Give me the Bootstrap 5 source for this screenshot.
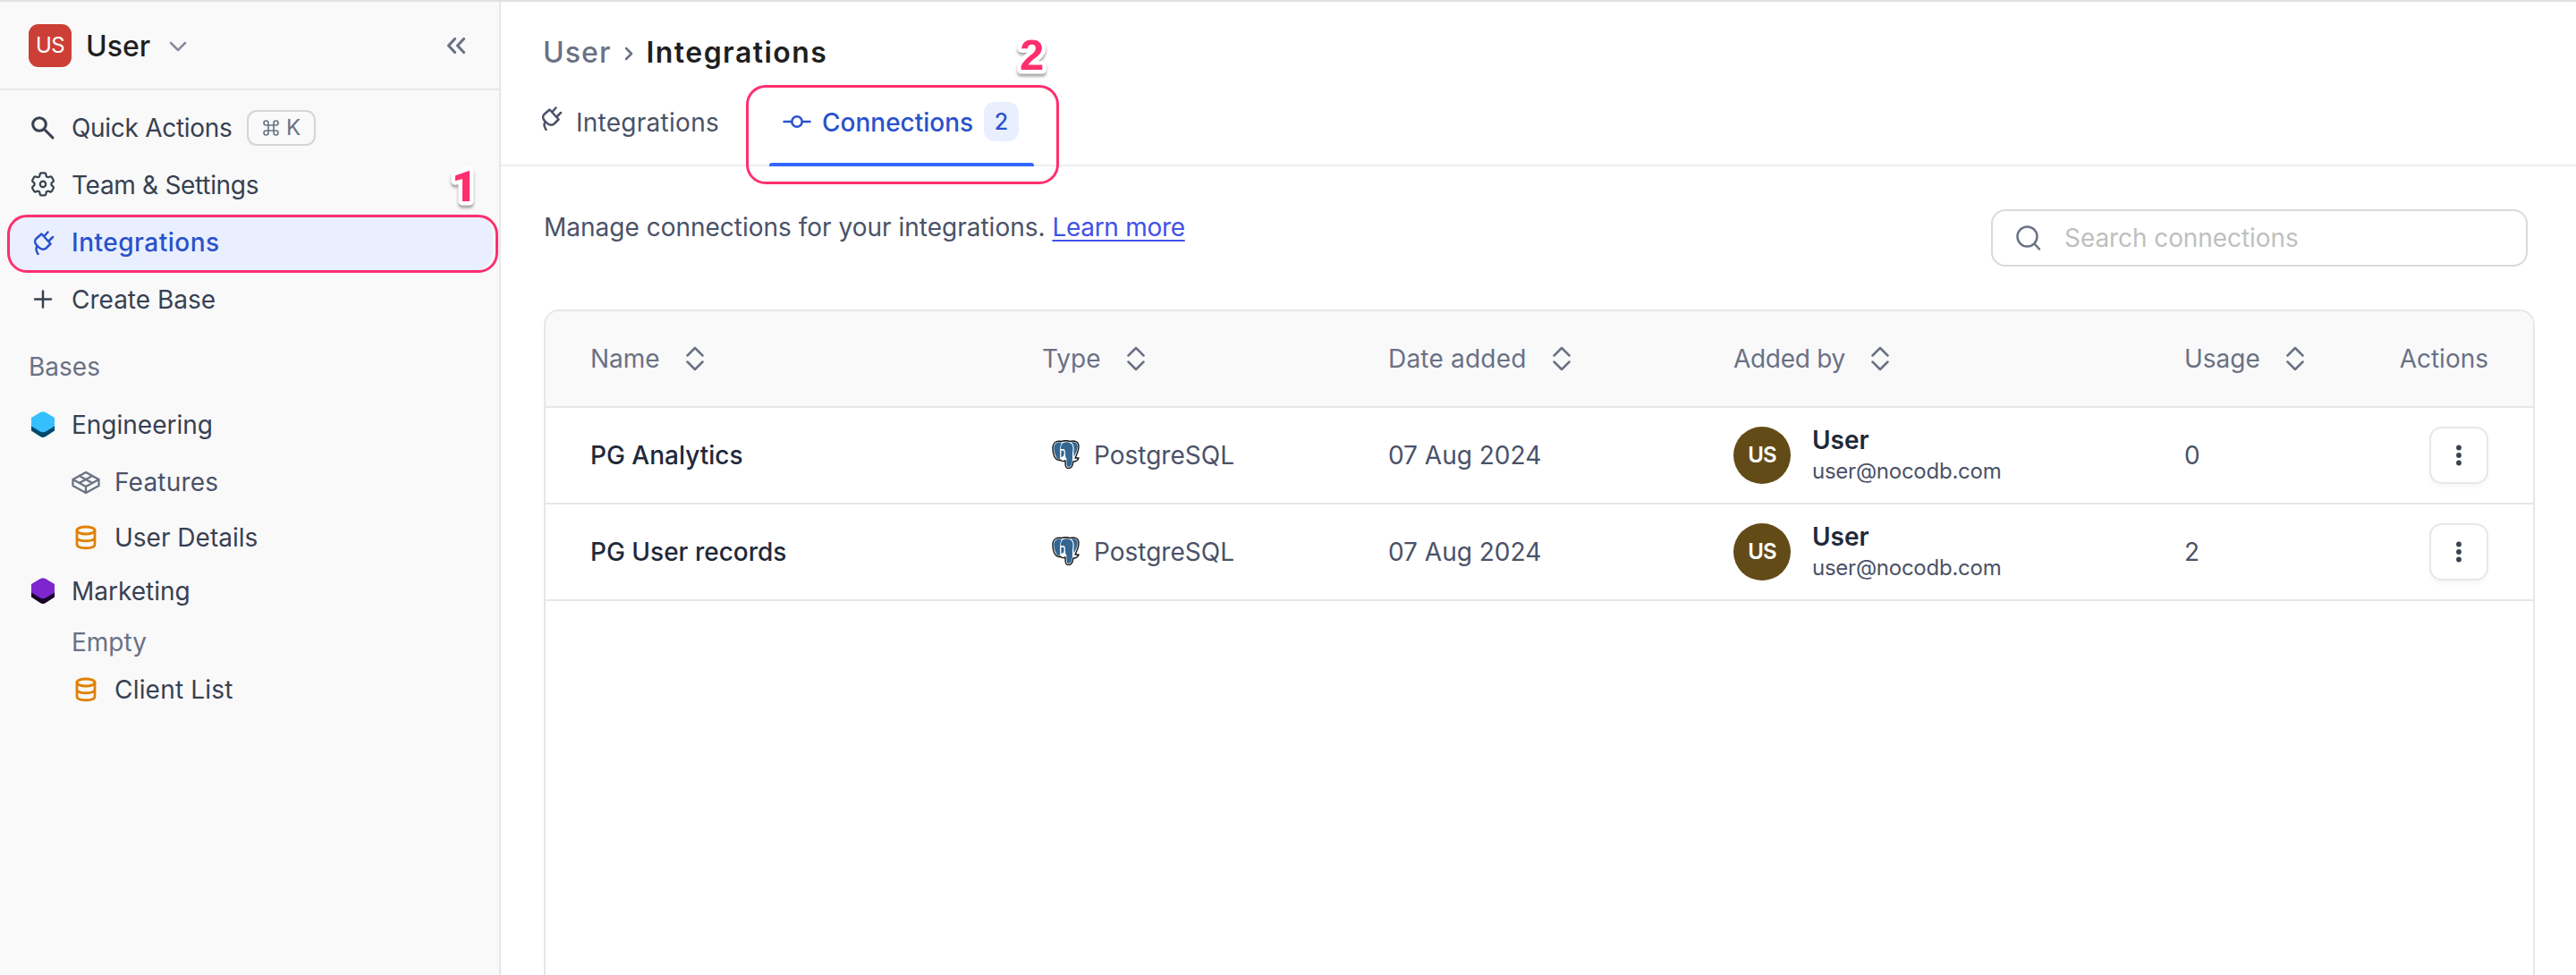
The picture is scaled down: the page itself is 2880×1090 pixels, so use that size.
<!DOCTYPE html>
<html lang="en">
<head>
<meta charset="utf-8">
<title>Integrations - Connections</title>
<link href="https://cdn.jsdelivr.net/npm/bootstrap@5.3.0/dist/css/bootstrap.min.css" rel="stylesheet">
<style>
body{font-family:Inter,"Liberation Sans",sans-serif;font-size:28px;line-height:40px;color:#374151;background:#fff;height:1090px;overflow:hidden}
svg{display:block;flex:none;overflow:visible;fill:none;stroke:currentColor;stroke-width:2.5;stroke-linecap:round;stroke-linejoin:round}
.sw-thin{stroke-width:1.6}.sw-mid{stroke-width:2.3}.sw-bold{stroke-width:3.1}.no-stroke{stroke:none}
.fw-medium{font-weight:500}
.t-slate{color:#6a7184}.t-gray{color:#4a5268}.t-dark{color:#1f293a}

.app-shell{height:1090px;border-top:2px solid #e1e1e1}

/* sidebar */
.side-pane{width:560px;background:#f9f9fa;border-right:2px solid #e7e7e9}
.side-head{height:99px;border-bottom:2px solid #e7e7e9;padding:0 38px 0 32px}
.ws-avatar{width:48px;height:48px;border-radius:11px;background:#cb3f36;color:#fff;font-size:24px;letter-spacing:-.6px}
.ws-name{font-size:32px;color:#1f1f1f;margin:2px 0 0 16px}
.ws-caret{opacity:.8;margin:2px auto 0 21px}
.side-list{padding-top:10px}
.side-item{height:64px;padding-left:34px;white-space:nowrap}
.side-item>svg{width:28px;height:28px;margin-right:18px}
.side-sub{padding-left:82px}
.side-active{color:#2952cc;margin:0 7px 0 8px;padding-left:26px;background:#e9effe;border-radius:22px}
.side-label{height:76px;line-height:40px;padding:23px 0 0 32px}
.h-60{height:60px}.h-54{height:54px}.h-52{height:52px}
.side-empty{padding-left:80px}
.s-quick{letter-spacing:-.3px}.s-wide{letter-spacing:.5px}.s-loose{letter-spacing:.2px}
.kbd-hint{width:77px;height:40px;border:2px solid #d5d5d9;border-radius:11px;font-size:24px;color:#6a7184;margin-left:17px}

/* numbered callouts */
.call-box{position:absolute;border:3px solid #ff2f6e;z-index:3}
.call-one{left:8px;top:240px;width:549px;height:65px;border-radius:22px}
.call-two{left:834px;top:95px;width:350px;height:111px;border-radius:22px}
.call-num{position:absolute;z-index:4;width:60px;height:60px;font:bold 49px "Liberation Sans",sans-serif;filter:drop-shadow(0 3px 1.5px rgba(0,0,0,.35))}
.call-num text{fill:#ff2f6e;stroke:#fff;stroke-width:9;paint-order:stroke}
.num-one{left:492px;top:180px;font-family:Roboto,sans-serif;font-weight:900}.num-two{left:1126px;top:33px}

/* page header */
.crumbs{height:88px;padding:24px 0 0 47px;font-size:32px;line-height:66px}
.c-user{letter-spacing:1.100px}.c-here{letter-spacing:1.450px;color:#1f1f1f}
.crumb-sep{margin:27px 16px 0 15px}
.tab-bar{height:96px;padding-left:44px;border-bottom:2px solid #ededee}
.tab-one{width:236px;line-height:40px;padding-top:27px}
.tab-plug{margin:1px 14px 0 -2px}
.t-int{letter-spacing:.27px}
.tab-two{width:296px;margin-left:20px;padding:24px 17px 0 15px;color:#2952cc;position:relative}
.tab-two::after{content:"";position:absolute;left:0;right:0;bottom:-2px;height:4px;background:#3366ff;border-radius:3px 3px 0 0}
.t-conn{margin-left:12px;line-height:44px;margin-top:1px}
.count-pill{width:39px;height:44px;border-radius:12px;background:#e9effe;font-size:25px}
.tool-row{height:160px;padding:48px 54px 0 49px}
.tool-text{margin-left:-1px}
.learn{color:#4351e8;text-decoration:underline;text-underline-offset:4px;text-decoration-thickness:2px;text-decoration-skip-ink:none;letter-spacing:-.3px}
.search-box{width:600px;height:64px;border:2px solid #d9d9d9;border-radius:16px;color:#bfbfbf;padding-left:24px}
.s-ph{margin-left:24px;letter-spacing:-.08px}

/* connection list */
.list-frame{margin:0 46px 0 48px;border:2px solid #e7e7e9;border-bottom:0;border-radius:17px 17px 0 0;overflow:hidden}
.conn-table{table-layout:fixed;width:100%;margin:0;border-collapse:separate;border-spacing:0;--bs-table-bg:transparent}
.conn-table>*>tr>*{height:108px;padding:0 0 0 50px;border:0;border-bottom:2px solid #e7e7e9;font-weight:400;vertical-align:middle;white-space:nowrap;color:#4a5268}
.conn-table>thead>tr>th{background:#f9f9fa;color:#6a7184}
.conn-table>*>tr>.act{padding:0 50px 0 0}
.conn-table>tbody>tr>.t-name{color:#1f293a}
.srt{margin:-1px 0 0 29px;color:#6a7184}
.s-date{letter-spacing:.2px}.s-added{letter-spacing:-.3px}
.pg{margin:-2px 16px 0 11px}
.user-dot{width:64px;height:64px;background:#624b17;color:#fff;font-size:24px;letter-spacing:-1px}
.who{margin-left:24px}.who-name{line-height:36px}
.mail{font-size:24px;letter-spacing:-.25px;line-height:34px}
.more-btn{width:66px;height:64px;border:2px solid #e7e7e9;border-radius:14px;box-shadow:0 4px 4px rgba(0,0,0,.03);color:#374151}
.dots{fill:currentColor;stroke:none}
</style>
<script src="https://cdn.jsdelivr.net/npm/bootstrap@5.3.0/dist/js/bootstrap.bundle.min.js"></script>
</head>
<body>
<svg width="0" height="0" class="position-absolute">
<symbol id="plug" viewBox="0 0 28 28"><path d="M12.5 4.500 22.500 15.500 17.500 20.500C15 22.400 12 22 9.500 19.700L7 17.200C4.600 14.600 4.600 11.600 6.500 9.700ZM15.500 7 19.500 2.500M20.500 12.500 25 8M7.500 18.500C5.600 21 6.500 24 8.500 27"/></symbol>
<symbol id="sort" viewBox="0 0 20 28"><path d="M1.500 10.500 10 2l8.500 8.500M1.500 17.500 10 26l8.500-8.500"/></symbol>
<symbol id="db" viewBox="0 0 28 28"><g stroke-width="2.800"><ellipse cx="14" cy="6" rx="10" ry="4"/><path d="M4 6v16c0 5 20 5 20 0V6M4 14c0 5 20 5 20 0"/></g></symbol>
<symbol id="elephant" viewBox="0 0 31 32">
<path stroke="#161616" stroke-width="1.400" fill="#fff" d="M1 9C1 2 6 .5 11 1.500 13 .4 18 .4 20 1.500 25 0 30 1.500 30 7 30 12 28 16 26 20L30 20C29 23 27 24 24 24 23 29 22 31.500 18.500 31.500 15 31.500 15 28 15 23 12 24 10 23.500 9.500 22 5 24 1 18 1 9Z"/>
<g stroke="none" fill="#336791"><path d="M2.300 9C2.300 3 7 2 11 2.700 9 6 8.800 12 9.300 19 9 22.500 6 22 4.500 18 3 15 2.300 12 2.300 9Z"/><path d="M12 3.500C16 1.500 21 2 23 6 24.500 10 22.500 14 23 19 23 24 22.500 30 18.500 30 16 30 16.500 25 16.300 20 14.500 20.500 15.500 15 14.500 11 12.500 9 10.500 10.500 10 10 10 7 10.500 4.800 12 3.500Z"/><path d="M21.500 2.500C26 1.500 28.900 3.500 28.800 7 28.800 11 26.500 15 24.600 18.500 24 14 25.300 9 24.300 7 24 5 23 3.700 21.500 2.500Z"/><path d="M10.500 12C12 11 13.800 12 13.800 14L13.300 17.500C12 18 11.500 19 10.800 19.500 10.200 17 10.300 14 10.500 12Z"/></g>
</symbol>
</svg>

<div class="app-shell d-flex">
<aside class="side-pane d-flex flex-column flex-shrink-0">
  <div class="side-head d-flex align-items-center">
    <div class="ws-avatar d-flex align-items-center justify-content-center">US</div>
    <div class="ws-name fw-medium">User</div>
    <svg class="ws-caret t-slate" width="20" height="12" viewBox="0 0 20 12"><path d="M2 2 10 10 18 2"/></svg>
    <svg class="t-slate sw-bold" width="20" height="18" viewBox="0 0 20 18"><path d="M8.500 1.500 1.500 9 8.500 16.500M18.500 1.500 11.500 9 18.500 16.500"/></svg>
  </div>
  <nav class="d-flex flex-column side-list">
    <div class="side-item d-flex align-items-center"><svg class="sw-bold" viewBox="0 0 28 28"><circle cx="10" cy="10" r="7.300"/><path d="M15.500 15.500 25 25"/></svg><span class="s-quick">Quick Actions</span><span class="kbd-hint d-flex align-items-center justify-content-center"><svg width="18" height="18" viewBox="0 0 18 18" class="sw-thin me-2"><path d="M6 6H12V12H6ZM6 6H3.500A2.500 2.500 0 1 1 6 3.500ZM12 6V3.500A2.500 2.500 0 1 1 14.500 6ZM12 12H14.500A2.500 2.500 0 1 1 12 14.500ZM6 12V14.500A2.500 2.500 0 1 1 3.500 12Z"/></svg>K</span></div>
    <div class="side-item d-flex align-items-center"><svg class="sw-thin" viewBox="1.900 2.700 20.200 20.200"><path d="M9.594 3.940c.09-.542.56-.94 1.110-.94h2.593c.55 0 1.020.398 1.110.94l.213 1.281c.063.374.313.686.645.87.074.04.147.083.22.127.325.196.72.257 1.075.124l1.217-.456a1.125 1.125 0 0 1 1.370.49l1.296 2.247a1.125 1.125 0 0 1-.26 1.431l-1.003.827c-.293.241-.438.613-.43.992a7.723 7.723 0 0 1 0 .255c-.008.378.137.75.43.991l1.004.827c.424.35.534.955.26 1.430l-1.298 2.247a1.125 1.125 0 0 1-1.369.491l-1.217-.456c-.355-.133-.75-.072-1.076.124a6.470 6.470 0 0 1-.22.128c-.331.183-.581.495-.644.869l-.213 1.281c-.09.543-.56.94-1.110.94h-2.594c-.55 0-1.019-.398-1.110-.94l-.213-1.281c-.062-.374-.312-.686-.644-.87a6.520 6.520 0 0 1-.22-.127c-.325-.196-.72-.257-1.076-.124l-1.217.456a1.125 1.125 0 0 1-1.369-.49l-1.297-2.247a1.125 1.125 0 0 1 .26-1.431l1.004-.827c.292-.24.437-.613.43-.991a6.932 6.932 0 0 1 0-.255c.007-.38-.138-.751-.43-.992l-1.004-.827a1.125 1.125 0 0 1-.26-1.430l1.297-2.247a1.125 1.125 0 0 1 1.370-.491l1.216.456c.356.133.751.072 1.076-.124.072-.044.146-.086.22-.128.332-.183.582-.495.644-.869l.214-1.280Z"/><circle cx="12" cy="12" r="2.300"/></svg><span class="s-quick">Team &amp; Settings</span></div>
    <div class="side-item side-active d-flex align-items-center fw-medium"><svg><use href="#plug"/></svg><span class="s-wide">Integrations</span></div>
    <div class="side-item d-flex align-items-center"><svg viewBox="0 0 28 28"><path d="M14 4.500v18M5 13.500h18"/></svg><span>Create Base</span></div>
    <div class="t-slate side-label">Bases</div>
    <div class="side-item d-flex align-items-center"><svg class="no-stroke" viewBox="0 0 28 28"><path fill="#004a6b" d="M1 14H27V20.500L17 27Q14 28.800 11 27L1 20.500Z"/><path fill="#36bfff" d="M11 0Q14-1.500 17 0L27 6V15.500L17 21.500Q14 23 11 21.500L1 15.500V6Z"/></svg><span>Engineering</span></div>
    <div class="side-item side-sub t-gray d-flex align-items-center"><svg class="t-slate sw-mid" viewBox="0 0 28 28"><path d="M-.5 11 14 3 28.500 11 14 19ZM-.5 11V18L14 26 28.500 18V11M14 19V26M6.700 7 21.200 15M21.200 7 6.700 15"/></svg><span class="s-loose">Features</span></div>
    <div class="side-item side-sub h-60 d-flex align-items-center"><svg color="#e08000"><use href="#db"/></svg><span>User Details</span></div>
    <div class="side-item h-60 d-flex align-items-center"><svg class="no-stroke" viewBox="0 0 28 28"><path fill="#17052b" d="M1 14H27V20.500L17 27Q14 28.800 11 27L1 20.500Z"/><path fill="#7d26cd" d="M11 0Q14-1.500 17 0L27 6V15.500L17 21.500Q14 23 11 21.500L1 15.500V6Z"/></svg><span>Marketing</span></div>
    <div class="side-item h-54 side-empty t-slate d-flex align-items-center">Empty</div>
    <div class="side-item h-52 side-sub d-flex align-items-center"><svg color="#e08000"><use href="#db"/></svg><span class="s-loose">Client List</span></div>
  </nav>
</aside>

<main class="flex-grow-1 d-flex flex-column">
  <div class="crumbs d-flex"><span class="t-slate fw-medium c-user">User</span><svg class="t-slate crumb-sep" width="8" height="14" viewBox="0 0 8 14"><path d="M1 1 7 7 1 13"/></svg><span class="fw-semibold c-here">Integrations</span></div>
  <div class="tab-bar d-flex">
    <div class="tab-one t-gray d-flex align-items-start"><svg width="28" height="28" class="tab-plug"><use href="#plug"/></svg><span class="t-int">Integrations</span></div>
    <div class="tab-two d-flex align-items-start fw-medium"><svg width="32" height="44" viewBox="0 0 32 44"><circle cx="16" cy="22" r="5.700"/><path d="M1.500 22H10M22 22h8.500"/></svg><span class="t-conn">Connections</span><span class="count-pill d-flex align-items-center justify-content-center ms-auto">2</span></div>
  </div>
  <div class="tool-row d-flex justify-content-between align-items-start">
    <div class="t-gray tool-text">Manage connections for your integrations. <a class="learn" href="#">Learn more</a></div>
    <div class="search-box d-flex align-items-center"><svg class="t-slate" width="32" height="32" viewBox="0 0 32 32"><circle cx="14.500" cy="14.500" r="11"/><path d="M23 23 28 28.500"/></svg><span class="s-ph">Search connections</span></div>
  </div>
  <div class="list-frame flex-grow-1">
    <table class="table conn-table">
      <colgroup><col width="505"><col width="387"><col width="386"><col width="504"><col width="200"><col></colgroup>
      <thead><tr>
        <th><div class="d-flex align-items-center">Name<svg class="srt" width="20" height="28"><use href="#sort"/></svg></div></th>
        <th><div class="d-flex align-items-center">Type<svg class="srt" width="20" height="28"><use href="#sort"/></svg></div></th>
        <th><div class="d-flex align-items-center"><span class="s-date">Date added</span><svg class="srt" width="20" height="28"><use href="#sort"/></svg></div></th>
        <th><div class="d-flex align-items-center"><span class="s-added">Added by</span><svg class="srt" width="20" height="28"><use href="#sort"/></svg></div></th>
        <th><div class="d-flex align-items-center">Usage<svg class="srt" width="20" height="28"><use href="#sort"/></svg></div></th>
        <th class="text-end act">Actions</th>
      </tr></thead>
      <tbody>
      <tr>
        <td class="t-name fw-medium">PG Analytics</td>
        <td><div class="d-flex align-items-center"><svg class="pg" width="31" height="32"><use href="#elephant"/></svg>PostgreSQL</div></td>
        <td>07 Aug 2024</td>
        <td><div class="d-flex align-items-center"><div class="user-dot rounded-circle d-flex align-items-center justify-content-center fw-semibold">US</div><div class="who"><div class="t-dark fw-semibold who-name">User</div><div class="mail">user@nocodb.com</div></div></div></td>
        <td>0</td>
        <td class="act"><div class="more-btn ms-auto d-flex align-items-center justify-content-center"><svg width="8" height="24" viewBox="0 0 8 24" class="dots"><circle cx="4" cy="3.500" r="2.900"/><circle cx="4" cy="12" r="2.900"/><circle cx="4" cy="20.500" r="2.900"/></svg></div></td>
      </tr>
      <tr>
        <td class="t-name fw-medium">PG User records</td>
        <td><div class="d-flex align-items-center"><svg class="pg" width="31" height="32"><use href="#elephant"/></svg>PostgreSQL</div></td>
        <td>07 Aug 2024</td>
        <td><div class="d-flex align-items-center"><div class="user-dot rounded-circle d-flex align-items-center justify-content-center fw-semibold">US</div><div class="who"><div class="t-dark fw-semibold who-name">User</div><div class="mail">user@nocodb.com</div></div></div></td>
        <td>2</td>
        <td class="act"><div class="more-btn ms-auto d-flex align-items-center justify-content-center"><svg width="8" height="24" viewBox="0 0 8 24" class="dots"><circle cx="4" cy="3.500" r="2.900"/><circle cx="4" cy="12" r="2.900"/><circle cx="4" cy="20.500" r="2.900"/></svg></div></td>
      </tr>
      </tbody>
    </table>
  </div>
</main>
</div>

<div class="call-box call-one"></div>
<div class="call-box call-two"></div>
<svg class="call-num num-one"><text x="13" y="45">1</text></svg>
<svg class="call-num num-two"><text x="14" y="45">2</text></svg>
</body>
</html>
